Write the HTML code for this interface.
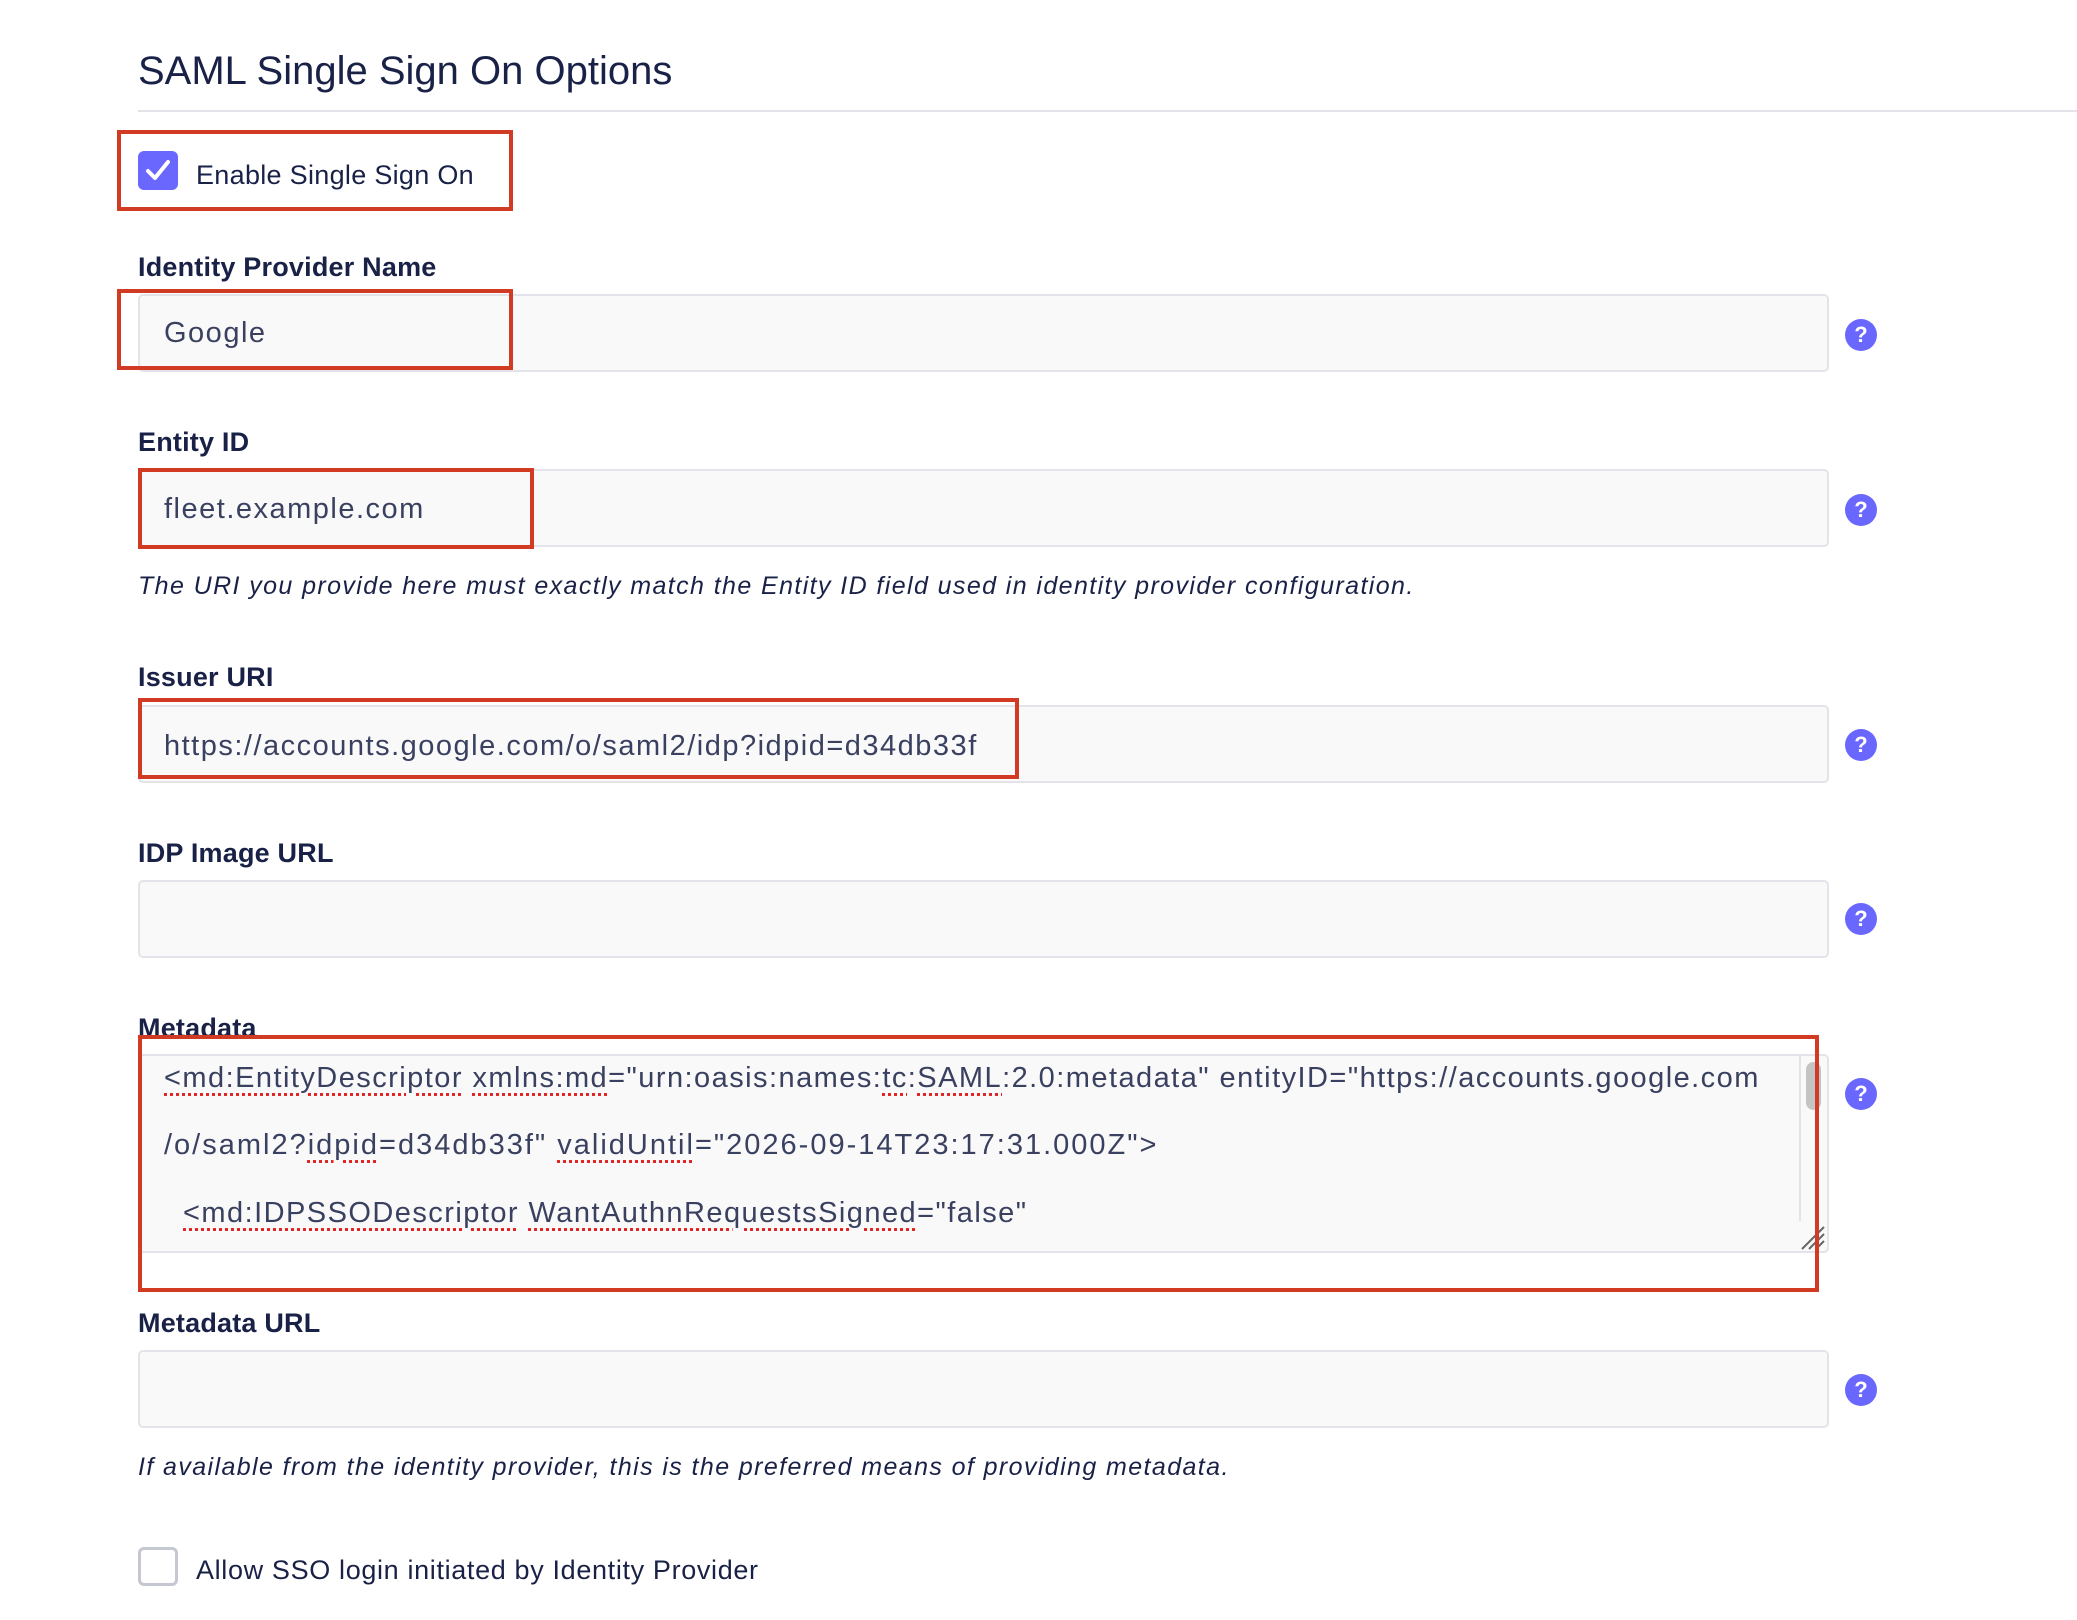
<!DOCTYPE html>
<html><head><meta charset="utf-8"><style>
body{margin:0;width:2077px;height:1620px;background:#fff;font-family:"Liberation Sans",sans-serif;color:#192147;position:relative;overflow:hidden}
.a{position:absolute}
.title{left:138px;top:49px;font-size:40px;white-space:nowrap}
.rule{left:138px;top:110px;width:1939px;height:2px;background:#e2e4ea}
.red{position:absolute;border:4px solid #d13b23;box-sizing:border-box}
.lbl{position:absolute;left:138px;font-size:27px;font-weight:bold;white-space:nowrap;letter-spacing:0.2px}
.inp{position:absolute;left:138px;width:1691px;height:78px;background:#f9f9f9;border:2px solid #e2e4ea;border-radius:5px;box-sizing:border-box}
.val{position:absolute;left:164px;font-size:29px;color:#3a4060;white-space:nowrap;letter-spacing:1.5px}
.help{position:absolute;left:1845px;width:32px;height:32px;border-radius:50%;background:#6a67fe;color:#fff;font-weight:bold;font-size:22px;text-align:center;line-height:32px}
.hint{position:absolute;left:138px;font-size:25px;font-style:italic;white-space:nowrap;letter-spacing:1.4px}
.cb{position:absolute;left:138px;width:40px;height:39px;border-radius:6px;box-sizing:border-box}
.u{text-decoration:underline dotted #e02020;text-underline-offset:6px}
.md{letter-spacing:1.45px}
</style></head><body>
<div class="a title">SAML Single Sign On Options</div>
<div class="a rule"></div>

<div class="red" style="left:117px;top:130px;width:396px;height:81px"></div>
<div class="cb" style="top:151px;background:#6a67fe"><svg width="40" height="39" viewBox="0 0 40 39"><path d="M10 20 L17 27 L30 11" stroke="#fff" stroke-width="4" fill="none" stroke-linecap="round" stroke-linejoin="round"/></svg></div>
<div class="a" style="left:196px;top:160px;font-size:27px;white-space:nowrap;letter-spacing:0.3px">Enable Single Sign On</div>

<div class="lbl" style="top:252px">Identity Provider Name</div>
<div class="inp" style="top:294px"></div>
<div class="val" style="top:317px">Google</div>
<div class="help" style="top:319px">?</div>
<div class="red" style="left:117px;top:289px;width:396px;height:81px"></div>

<div class="lbl" style="top:427px">Entity ID</div>
<div class="inp" style="top:469px"></div>
<div class="val" style="top:493px">fleet.example.com</div>
<div class="help" style="top:494px">?</div>
<div class="red" style="left:138px;top:468px;width:396px;height:81px"></div>
<div class="hint" style="top:572px">The URI you provide here must exactly match the Entity ID field used in identity provider configuration.</div>

<div class="lbl" style="top:662px">Issuer URI</div>
<div class="inp" style="top:705px"></div>
<div class="val" style="top:730px">https://accounts.google.com/o/saml2/idp?idpid=d34db33f</div>
<div class="help" style="top:729px">?</div>
<div class="red" style="left:138px;top:698px;width:881px;height:81px"></div>

<div class="lbl" style="top:838px">IDP Image URL</div>
<div class="inp" style="top:880px"></div>
<div class="help" style="top:903px">?</div>

<div class="lbl" style="top:1013px">Metadata</div>
<div class="inp" style="top:1054px;height:199px"></div>
<div class="a" style="left:1799px;top:1056px;width:2px;height:165px;background:#e2e4ea"></div>
<div class="a" style="left:1806px;top:1062px;width:15px;height:48px;border-radius:8px;background:#c4c4c4"></div>
<svg class="a" style="left:1800px;top:1225px" width="26" height="26"><path d="M2 24 L24 2 M9 24 L24 9 M16 24 L24 16" stroke="#666" stroke-width="2"/></svg>
<div class="val md" style="top:1062px"><span class="u">&lt;md:EntityDescriptor</span> <span class="u">xmlns:md</span>="urn:oasis:names:<span class="u">tc</span>:<span class="u">SAML</span>:2.0:metadata" entityID="https://accounts.google.com</div>
<div class="val" style="top:1129px;letter-spacing:2px">/o/saml2?<span class="u">idpid</span>=d34db33f" <span class="u">validUntil</span>="2026-09-14T23:17:31.000Z"&gt;</div>
<div class="val md" style="top:1197px">&nbsp; <span class="u">&lt;md:IDPSSODescriptor</span> <span class="u">WantAuthnRequestsSigned</span>="false"</div>
<div class="help" style="top:1078px">?</div>
<div class="red" style="left:138px;top:1035px;width:1681px;height:257px"></div>

<div class="lbl" style="top:1308px">Metadata URL</div>
<div class="inp" style="top:1350px"></div>
<div class="help" style="top:1374px">?</div>
<div class="hint" style="top:1453px">If available from the identity provider, this is the preferred means of providing metadata.</div>

<div class="cb" style="top:1547px;border:3px solid #c5c7d1"></div>
<div class="a" style="left:196px;top:1555px;font-size:27px;white-space:nowrap;letter-spacing:0.65px">Allow SSO login initiated by Identity Provider</div>
</body></html>
